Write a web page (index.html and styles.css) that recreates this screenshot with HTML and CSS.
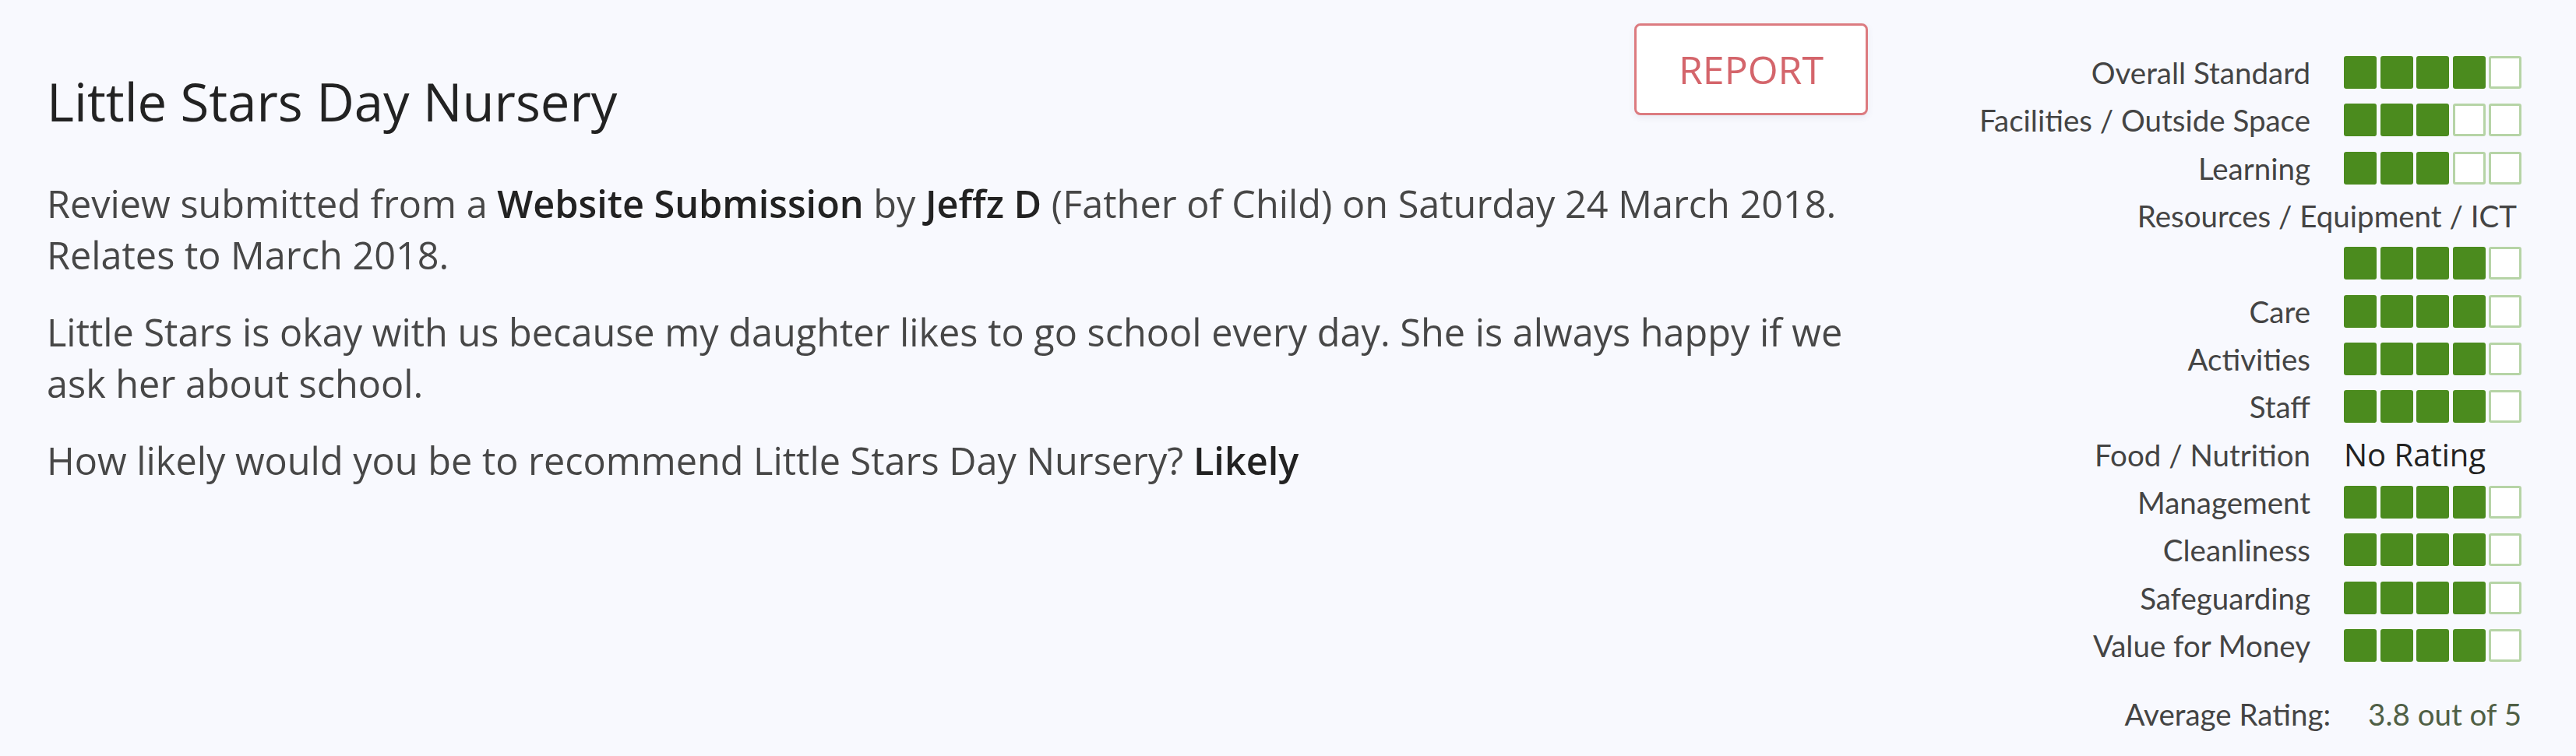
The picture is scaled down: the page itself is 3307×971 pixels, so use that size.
FILE: index.html
```html
<!DOCTYPE html>
<html lang="en">
<head>
<meta charset="utf-8">
<title>Little Stars Day Nursery – Review</title>
<link rel="stylesheet" href="styles.css">
</head>
<body>
<div class="page">
  <section class="review">
    <header class="review-head">
      <h1 class="title">Little Stars Day Nursery</h1>
      <button class="report" type="button">REPORT</button>
    </header>
    <p class="para">Review submitted from a <b>Website Submission</b> by <b>Jeffz D</b> (Father of Child) on Saturday 24 March 2018. Relates to March 2018.</p>
    <p class="para">Little Stars is okay with us because my daughter likes to go school every day. She is always happy if we ask her about school.</p>
    <p class="para">How likely would you be to recommend Little Stars Day Nursery? <b>Likely</b></p>
  </section>

  <aside class="ratings">
    <div class="rating-grid">
      <span class="label">Overall Standard</span>
      <span class="bar"><i class="box on"></i><i class="box on"></i><i class="box on"></i><i class="box on"></i><i class="box off"></i></span>

      <span class="label">Facilities / Outside Space</span>
      <span class="bar"><i class="box on"></i><i class="box on"></i><i class="box on"></i><i class="box off"></i><i class="box off"></i></span>

      <span class="label">Learning</span>
      <span class="bar"><i class="box on"></i><i class="box on"></i><i class="box on"></i><i class="box off"></i><i class="box off"></i></span>

      <span class="label label-wide">Resources / Equipment / ICT</span>
      <span class="label"></span>
      <span class="bar"><i class="box on"></i><i class="box on"></i><i class="box on"></i><i class="box on"></i><i class="box off"></i></span>

      <span class="label">Care</span>
      <span class="bar"><i class="box on"></i><i class="box on"></i><i class="box on"></i><i class="box on"></i><i class="box off"></i></span>

      <span class="label">Activities</span>
      <span class="bar"><i class="box on"></i><i class="box on"></i><i class="box on"></i><i class="box on"></i><i class="box off"></i></span>

      <span class="label">Staff</span>
      <span class="bar"><i class="box on"></i><i class="box on"></i><i class="box on"></i><i class="box on"></i><i class="box off"></i></span>

      <span class="label">Food / Nutrition</span>
      <span class="no-rating">No Rating</span>

      <span class="label">Management</span>
      <span class="bar"><i class="box on"></i><i class="box on"></i><i class="box on"></i><i class="box on"></i><i class="box off"></i></span>

      <span class="label">Cleanliness</span>
      <span class="bar"><i class="box on"></i><i class="box on"></i><i class="box on"></i><i class="box on"></i><i class="box off"></i></span>

      <span class="label">Safeguarding</span>
      <span class="bar"><i class="box on"></i><i class="box on"></i><i class="box on"></i><i class="box on"></i><i class="box off"></i></span>

      <span class="label">Value for Money</span>
      <span class="bar"><i class="box on"></i><i class="box on"></i><i class="box on"></i><i class="box on"></i><i class="box off"></i></span>
    </div>
    <div class="average">
      <span class="avg-label">Average Rating:</span>
      <span class="avg-value">3.8 out of 5</span>
    </div>
  </aside>
</div>
</body>
</html>
```

FILE: styles.css
```css
html, body {
  margin: 0;
  padding: 0;
}

body {
  background: #f8f9fe;
  font-family: "Open Sans", "Liberation Sans", sans-serif;
  color: #454545;
  width: 3307px;
  height: 971px;
  overflow: hidden;
}

.page {
  display: flex;
  justify-content: space-between;
  align-items: flex-start;
}

/* ---------- review column ---------- */
.review {
  width: 2370px;
  margin-left: 60px;
  padding-top: 30px;
}

.review-head {
  display: flex;
  justify-content: space-between;
  align-items: flex-start;
}

.title {
  margin: 55px 0 0 0;
  font-size: 67px;
  font-weight: 400;
  line-height: 91px;
  color: #222;
}

.report {
  width: 300px;
  height: 118px;
  margin-right: 32px;
  background: #fff;
  border: 3px solid #dc7b80;
  border-radius: 8px;
  box-shadow: 0 3px 8px rgba(60, 70, 120, 0.08);
  color: #d4656b;
  font-family: "Open Sans", "Liberation Sans", sans-serif;
  font-size: 50px;
  font-weight: 400;
  padding: 0;
}

.para {
  margin: 0 0 33px 0;
  font-size: 48.6px;
  line-height: 66px;
  color: #474747;
}

.review-head + .para {
  margin-top: 52px;
}

.para b {
  font-weight: 600;
  color: #222;
}

/* ---------- ratings panel ---------- */
.ratings {
  margin-right: 70px;
  padding-top: 72px;
  display: flex;
  flex-direction: column;
  align-items: flex-end;
  font-family: Lato, "Open Sans", sans-serif;
}

.rating-grid {
  display: grid;
  grid-template-columns: max-content 228px;
  column-gap: 43px;
  row-gap: 19.33px;
  align-items: center;
}

.label {
  text-align: right;
  font-size: 38.5px;
  line-height: 42px;
  color: #444;
  white-space: nowrap;
}

.label-wide {
  grid-column: 1 / -1;
  padding-right: 6px;
}

.bar {
  display: flex;
  gap: 4.5px;
  height: 42px;
}

.box {
  display: block;
  width: 42px;
  height: 42px;
  box-sizing: border-box;
  border-radius: 3px;
}

.box.on {
  background: #4b8b1e;
}

.box.off {
  background: #fff;
  border: 3px solid #b6d4a6;
}

.no-rating {
  font-family: "Open Sans", "Liberation Sans", sans-serif;
  font-size: 40px;
  line-height: 42px;
  color: #222;
  white-space: nowrap;
}

.average {
  margin-top: 46px;
  display: flex;
  gap: 48px;
  font-size: 38.5px;
  line-height: 42px;
  white-space: nowrap;
}

.avg-label {
  color: #444;
}

.avg-value {
  color: #4f5f45;
}
```
